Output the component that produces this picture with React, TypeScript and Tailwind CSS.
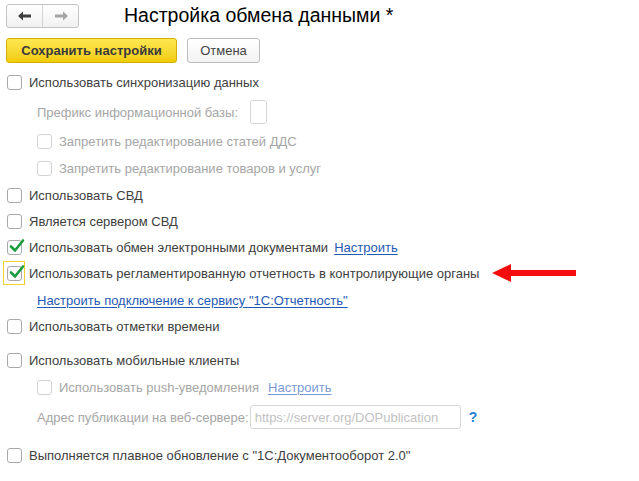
import React from "react";

const font = { fontFamily: '"Liberation Sans", Arial, sans-serif' };

function Box({ checked, disabled, focus }: { checked?: boolean; disabled?: boolean; focus?: boolean }) {
  const box = (
    <span
      className={`relative inline-block w-[15px] h-[15px] rounded-[3px] border bg-white ${disabled ? "border-[#d3d3d3]" : "border-[#a9a9a9]"}`}
    >
      {checked && (
        <svg className="absolute left-[1px] top-[-3px]" width="16" height="16" viewBox="0 0 16 16">
          <path d="M2 8.5 L6 12.5 L14 2.5" fill="none" stroke="#1d9e3e" strokeWidth="2.6" strokeLinecap="round" strokeLinejoin="round" />
        </svg>
      )}
    </span>
  );
  if (focus) {
    return (
      <span className="inline-flex items-center justify-center w-[22px] h-[24px] border border-[#f2d12f] ml-[-4px] mr-[-3px]">
        {box}
      </span>
    );
  }
  return box;
}

function Row({ mt, indent, children }: { mt: string; indent?: boolean; children: React.ReactNode }) {
  return (
    <div className={`flex items-center h-[26px] ${mt} ${indent ? "pl-[37px]" : "pl-[7px]"}`}>{children}</div>
  );
}

function Check({
  label,
  checked,
  disabled,
  focus,
}: {
  label: string;
  checked?: boolean;
  disabled?: boolean;
  focus?: boolean;
}) {
  return (
    <span className="flex items-center">
      <Box checked={checked} disabled={disabled} focus={focus} />
      <span className={`ml-[7px] ${disabled ? "text-[#a6a6a6]" : "text-[#404040]"}`}>{label}</span>
    </span>
  );
}

export default function App() {
  return (
    <div className="w-[639px] h-[481px] bg-white text-[13px] leading-none" style={font}>
      {/* header */}
      <div className="flex items-center pt-[4px] pl-[6px] h-[28px]">
        <div className="flex h-[24px] w-[73px] rounded-[3px] border border-[#c4c4c4] bg-gradient-to-b from-white to-[#f1f1f1]">
          <div className="flex-1 flex items-center justify-center border-r border-[#d4d4d4]">
            <svg width="14" height="10" viewBox="0 0 14 10">
              <path d="M0 5 L5 0.5 L5 3.5 L13 3.5 L13 6.5 L5 6.5 L5 9.5 Z" fill="#3e3e3e" />
            </svg>
          </div>
          <div className="flex-1 flex items-center justify-center">
            <svg width="14" height="10" viewBox="0 0 14 10">
              <path d="M14 5 L9 0.5 L9 3.5 L1 3.5 L1 6.5 L9 6.5 L9 9.5 Z" fill="#a5a5a5" />
            </svg>
          </div>
        </div>
        <div className="ml-[45px] text-[19.5px] text-black">Настройка обмена данными *</div>
      </div>

      <div className="flex items-center gap-[10px] pl-[6px] mt-[10px]">
        <button className="h-[25px] w-[171px] rounded-[3px] border border-[#d2b000] bg-gradient-to-b from-[#fde84f] to-[#f1cc00] font-bold text-[#3a3a3a] text-[13px]">
          Сохранить настройки
        </button>
        <button className="h-[25px] w-[73px] rounded-[3px] border border-[#bdbdbd] bg-gradient-to-b from-white to-[#f3f3f3] text-[#444] text-[13px]">
          Отмена
        </button>
      </div>

      <div className="flex flex-col mt-[6px]">
        <Row mt="mt-0">
          <Check label="Использовать синхронизацию данных" />
        </Row>
        <Row mt="mt-[4px]" indent>
          <span className="text-[#a6a6a6]">Префикс информационной базы:</span>
          <span className="ml-[12px] w-[17px] h-[24px] rounded-[3px] border border-[#d6d6d6] bg-white" />
        </Row>
        <Row mt="mt-[3px]" indent>
          <Check label="Запретить редактирование статей ДДС" disabled />
        </Row>
        <Row mt="mt-[1px]" indent>
          <Check label="Запретить редактирование товаров и услуг" disabled />
        </Row>
        <Row mt="mt-[1px]">
          <Check label="Использовать СВД" />
        </Row>
        <Row mt="mt-0">
          <Check label="Является сервером СВД" />
        </Row>
        <Row mt="mt-0">
          <Check label="Использовать обмен электронными документами" checked />
          <a className="ml-[6px] text-[#1f5ab4] underline underline-offset-2">Настроить</a>
        </Row>
        <Row mt="mt-0">
          <Check label="Использовать регламентированную отчетность в контролирующие органы" checked focus />
          <svg className="ml-[13px]" width="86" height="18" viewBox="0 0 86 18">
            <path d="M0 9 L19 0 L19 6 L84 6 L84 12 L19 12 L19 18 Z" fill="#f50d0d" />
          </svg>
        </Row>
        <Row mt="mt-[1px]" indent>
          <a className="text-[#1f5ab4] underline underline-offset-2">Настроить подключение к сервису "1С:Отчетность"</a>
        </Row>
        <Row mt="mt-0">
          <Check label="Использовать отметки времени" />
        </Row>
        <Row mt="mt-[8px]">
          <Check label="Использовать мобильные клиенты" />
        </Row>
        <Row mt="mt-[1px]" indent>
          <Check label="Использовать push-уведомления" disabled />
          <a className="ml-[9px] text-[#7b9ad4] underline underline-offset-2">Настроить</a>
        </Row>
        <Row mt="mt-[4px]" indent>
          <span className="text-[#a6a6a6]">Адрес публикации на веб-сервере:</span>
          <span className="ml-[1px] w-[211px] h-[24px] rounded-[3px] border border-[#d6d6d6] bg-white flex items-center pl-[4px] text-[#c2c2c2]">
            https://server.org/DOPublication
          </span>
          <span className="ml-[8px] text-[#2a7fd0] font-bold text-[14px]">?</span>
        </Row>
        <Row mt="mt-[12px]">
          <Check label='Выполняется плавное обновление с "1С:Документооборот 2.0"' />
        </Row>
      </div>
    </div>
  );
}
